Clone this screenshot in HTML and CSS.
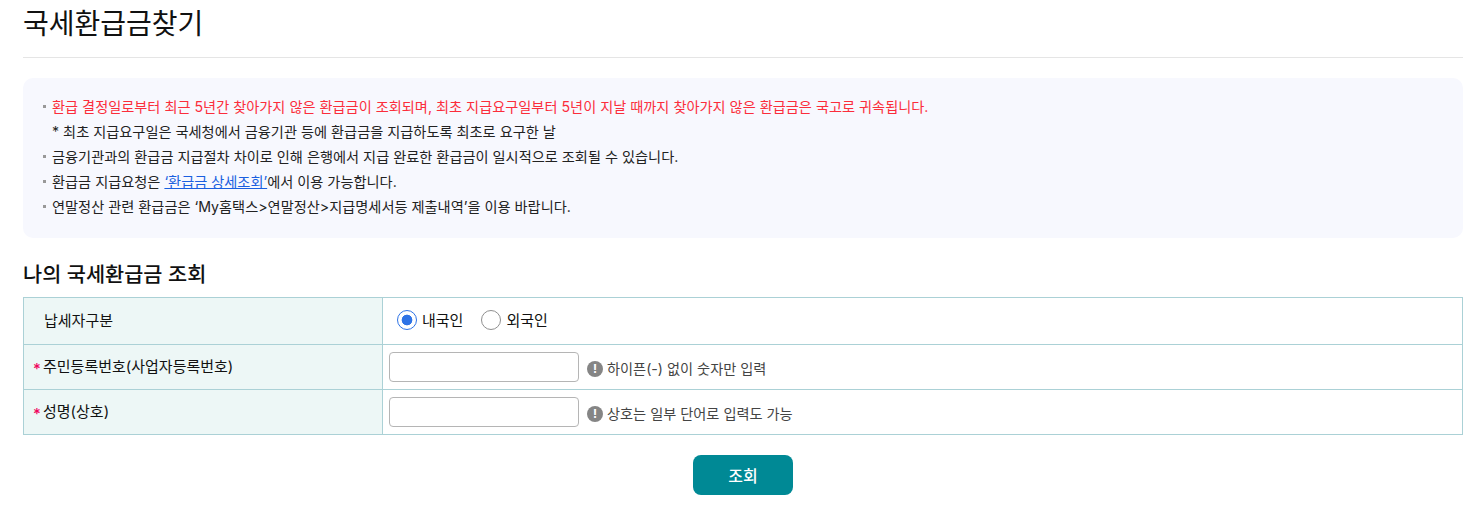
FILE: index.html
```html
<!DOCTYPE html>
<html lang="ko">
<head>
  <meta charset="UTF-8" />
  <title>국세환급금찾기</title>
  <link rel="stylesheet" href="styles.css">
</head>
<body>
  <h1 class="page-title">국세환급금찾기</h1>

  <ul class="notice">
    <li class="red">환급 결정일로부터 최근 5년간 찾아가지 않은 환급금이 조회되며, 최초 지급요구일부터 5년이 지날 때까지 찾아가지 않은 환급금은 국고로 귀속됩니다.</li>
    <li class="sub">* 최초 지급요구일은 국세청에서 금융기관 등에 환급금을 지급하도록 최초로 요구한 날</li>
    <li>금융기관과의 환급금 지급절차 차이로 인해 은행에서 지급 완료한 환급금이 일시적으로 조회될 수 있습니다.</li>
    <li>환급금 지급요청은 <a href="#">‘환급금 상세조회’</a>에서 이용 가능합니다.</li>
    <li>연말정산 관련 환급금은 ‘My홈택스&gt;연말정산&gt;지급명세서등 제출내역’을 이용 바랍니다.</li>
  </ul>

  <h2 class="section-title">나의 국세환급금 조회</h2>

  <form>
    <table class="form-table">
      <tr class="row-type">
        <th><span class="no-mark">납세자구분</span></th>
        <td>
          <div class="radios">
            <label class="radio"><input type="radio" name="kind" checked>내국인</label>
            <label class="radio"><input type="radio" name="kind">외국인</label>
          </div>
        </td>
      </tr>
      <tr>
        <th><span class="req">*</span>주민등록번호(사업자등록번호)</th>
        <td>
          <div class="field">
            <input type="text" class="txt">
            <span class="hint"><i class="info">!</i>하이픈(-) 없이 숫자만 입력</span>
          </div>
        </td>
      </tr>
      <tr>
        <th><span class="req">*</span>성명(상호)</th>
        <td>
          <div class="field">
            <input type="text" class="txt">
            <span class="hint"><i class="info">!</i>상호는 일부 단어로 입력도 가능</span>
          </div>
        </td>
      </tr>
    </table>

    <div class="btn-wrap">
      <button type="button" class="btn-search">조회</button>
    </div>
  </form>
</body>
</html>
```

FILE: styles.css
```css
* {
  box-sizing: border-box;
}

body {
  margin: 0;
  padding: 0 13px 0 23px;
  font-family: Inter, "Noto Sans CJK KR", sans-serif;
  color: #222;
  background: #fff;
}

.page-title {
  margin: 0;
  height: 58px;
  padding-top: 4px;
  font-size: 28px;
  line-height: 40px;
  font-weight: 400;
  color: #111;
  border-bottom: 1px solid #e5e5e5;
}

.notice {
  list-style: none;
  margin: 20px 0 0;
  padding: 16px 20px 18px;
  height: 160px;
  background: #f7f8fe;
  border-radius: 10px;
}

.notice li {
  position: relative;
  padding-left: 9px;
  font-size: 14.2px;
  line-height: 25px;
  color: #222;
}

.notice li::before {
  content: "";
  position: absolute;
  left: 0;
  top: 11px;
  width: 3px;
  height: 3px;
  background: #999;
}

.notice li.red {
  color: #fb2d3b;
}

.notice li.sub::before {
  display: none;
}

.notice a {
  color: #1a5fe0;
  text-decoration: underline;
}

.section-title {
  margin: 23px 0 0;
  font-size: 20.8px;
  line-height: 28px;
  font-weight: 500;
  color: #111;
}

.form-table {
  width: 100%;
  margin-top: 8px;
  border-collapse: collapse;
  table-layout: fixed;
  border: 1px solid #abd1d6;
}

.form-table th,
.form-table td {
  border: 1px solid #abd1d6;
  height: 45px;
  padding: 0;
  font-size: 15px;
  font-weight: 400;
}

.form-table .row-type th,
.form-table .row-type td {
  height: 47px;
}

.form-table th {
  width: 359px;
  padding-left: 9px;
  padding-bottom: 4px;
  text-align: left;
  background: #edf7f6;
  color: #111;
}

.form-table td {
  padding-left: 6px;
}

.no-mark {
  padding-left: 11px;
}

.req {
  display: inline-block;
  width: 10px;
  color: #f0045e;
  font-size: 15px;
  font-weight: 500;
  line-height: 1;
  vertical-align: -2px;
}

.radios {
  display: flex;
  gap: 18px;
  padding-left: 8px;
  margin-bottom: 4px;
}

.radio {
  display: flex;
  align-items: center;
  gap: 5px;
  color: #111;
}

.radio input {
  appearance: none;
  width: 20px;
  height: 20px;
  margin: 2px 0 0;
  border: 1px solid #8f8f8f;
  border-radius: 50%;
  background: #fff;
}

.radio input:checked {
  border-color: #2e73e6;
  background: radial-gradient(circle, #2e73e6 0, #2e73e6 5px, #fff 5.7px);
}

.field {
  display: flex;
  align-items: center;
  gap: 8px;
}

.txt {
  width: 190px;
  height: 30px;
  border: 1px solid #b5b5b5;
  border-radius: 4px;
  background: #fff;
}

.hint {
  display: flex;
  align-items: center;
  gap: 4px;
  margin-top: 2px;
  font-size: 14.2px;
  color: #444;
}

.info {
  width: 16px;
  height: 16px;
  margin-top: 1px;
  border-radius: 50%;
  background: #858585;
  color: #fff;
  font-size: 12px;
  font-style: normal;
  font-weight: 700;
  line-height: 16px;
  text-align: center;
}

.btn-wrap {
  display: flex;
  justify-content: center;
  margin-top: 20px;
}

.btn-search {
  width: 100px;
  height: 40px;
  border: none;
  border-radius: 8px;
  background: #008995;
  color: #fff;
  font-family: inherit;
  font-size: 16px;
  font-weight: 500;
}
```
